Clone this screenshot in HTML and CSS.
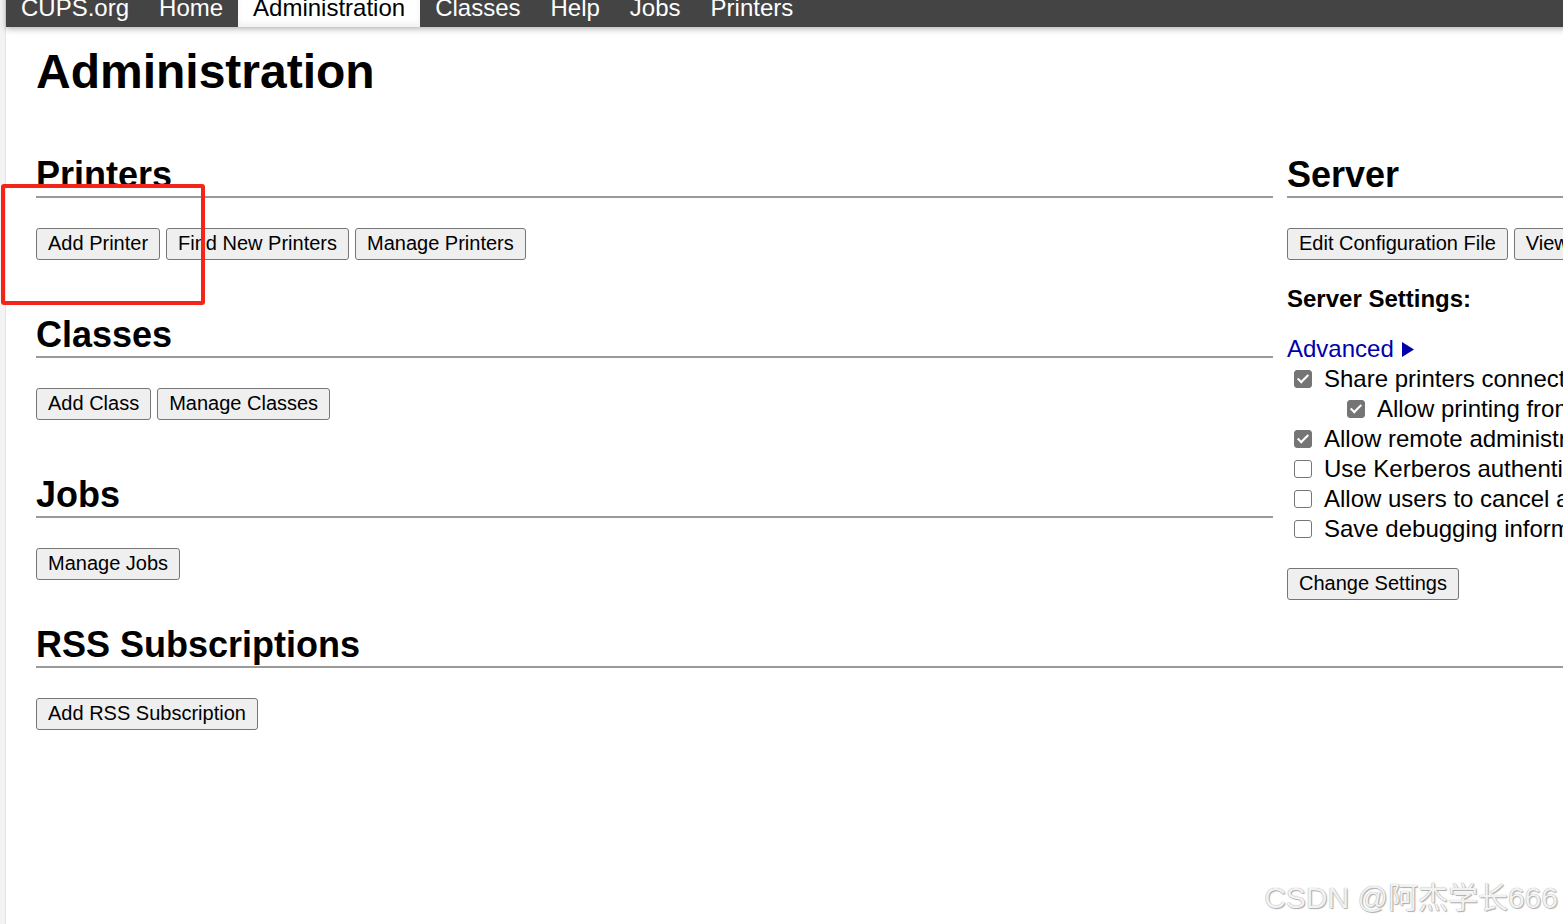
FILE: index.html
```html
<!DOCTYPE html>
<html>
<head>
<meta charset="utf-8">
<title>Administration - CUPS</title>
<link rel="stylesheet" href="styles.css">
</head>
<body>

<div class="page">
    <nav class="navbar">
        <a class="nav-item" href="#">CUPS.org</a>
        <a class="nav-item" href="#">Home</a>
        <a class="nav-item active" href="#">Administration</a>
        <a class="nav-item" href="#">Classes</a>
        <a class="nav-item" href="#">Help</a>
        <a class="nav-item" href="#">Jobs</a>
        <a class="nav-item" href="#">Printers</a>
    </nav>

    <main class="content">
        <h1 class="title">Administration</h1>

        <div class="columns">
            <div class="col">
                <section class="block">
                    <h2 class="block-title">Printers</h2>
                    <div class="buttons">
                        <button class="btn">Add Printer</button>
                        <button class="btn">Find New Printers</button>
                        <button class="btn">Manage Printers</button>
                    </div>
                </section>

                <section class="block">
                    <h2 class="block-title">Classes</h2>
                    <div class="buttons">
                        <button class="btn">Add Class</button>
                        <button class="btn">Manage Classes</button>
                    </div>
                </section>

                <section class="block">
                    <h2 class="block-title">Jobs</h2>
                    <div class="buttons">
                        <button class="btn">Manage Jobs</button>
                    </div>
                </section>
            </div>

            <div class="col">
                <section class="block">
                    <h2 class="block-title">Server</h2>
                    <div class="buttons">
                        <button class="btn">Edit Configuration File</button>
                        <button class="btn">View Access Log</button>
                        <button class="btn">View Error Log</button>
                        <button class="btn">View Page Log</button>
                    </div>

                    <p class="settings-label">Server Settings:</p>

                    <div class="options">
                        <div class="option-row">
                            <a class="advanced" href="#">Advanced
                                <svg class="arrow" width="12" height="15" viewBox="0 0 12 15"><path d="M0 0 L12 7.5 L0 15 Z" fill="#0000aa"/></svg>
                            </a>
                        </div>
                        <label class="option-row"><input type="checkbox" class="check" checked> Share printers connected to this system</label>
                        <label class="option-row indent"><input type="checkbox" class="check" checked> Allow printing from the Internet</label>
                        <label class="option-row"><input type="checkbox" class="check" checked> Allow remote administration</label>
                        <label class="option-row"><input type="checkbox" class="check"> Use Kerberos authentication (FAQ)</label>
                        <label class="option-row"><input type="checkbox" class="check"> Allow users to cancel any job (not just their own)</label>
                        <label class="option-row"><input type="checkbox" class="check"> Save debugging information for troubleshooting</label>
                    </div>

                    <div class="buttons settings-submit">
                        <button class="btn">Change Settings</button>
                    </div>
                </section>
            </div>
        </div>

        <section class="block rss">
            <h2 class="block-title">RSS Subscriptions</h2>
            <div class="buttons">
                <button class="btn">Add RSS Subscription</button>
            </div>
        </section>
    </main>
</div>

<div class="annotation"></div>
<div class="watermark">CSDN @阿杰学长666</div>

</body>
</html>
```

FILE: styles.css
```css
html, body {
    overflow: hidden;
}

body {
    margin: 0;
    background: #f3f3f3;
    color: #000;
    font-family: "Liberation Sans", Arial, sans-serif;
    font-size: 24px;
}

.page {
    margin-left: 5px;
    border-left: 1px solid #e4e4e4;
    background: #fff;
    min-height: 960px;
    width: 2600px;
}

/* top bar, scrolled a few pixels out of view */
.navbar {
    display: flex;
    height: 33px;
    margin-top: -6px;
    background: #444;
    box-shadow: 0 2px 6px rgba(0,0,0,0.3);
}

.nav-item {
    display: block;
    padding: 0 15px;
    line-height: 28px;
    color: #fff;
    text-decoration: none;
}

.nav-item.active {
    background: #fff;
    color: #000;
    box-shadow: inset 0 -4px 6px rgba(0,0,0,0.06);
}

.content {
    padding: 0 30px;
}

.title {
    margin: 17px 0 54px;
    font-size: 48px;
    line-height: 56px;
    font-weight: bold;
}

.columns {
    display: grid;
    grid-template-columns: 1237px 1237px;
    column-gap: 14px;
    align-items: start;
}

.block + .block {
    margin-top: 54px;
}

.block-title {
    margin: 0;
    font-size: 36px;
    line-height: 42px;
    font-weight: bold;
    border-bottom: 2px solid #9a9a9a;
}

.buttons {
    display: flex;
    gap: 6px;
    margin-top: 30px;
    white-space: nowrap;
}

.btn {
    height: 32px;
    padding: 0 11px 2px;
    border: 1px solid #767676;
    border-radius: 3px;
    background: #efefef;
    color: #000;
    font-family: "Liberation Sans", Arial, sans-serif;
    font-size: 20px;
    line-height: 28px;
}

.settings-label {
    margin: 24px 0 0;
    line-height: 30px;
    font-weight: bold;
}

.options {
    margin-top: 20px;
    white-space: nowrap;
}

.option-row {
    display: flex;
    align-items: center;
    height: 30px;
}

.option-row.indent {
    padding-left: 53px;
}

.advanced {
    color: #0000aa;
    text-decoration: none;
}

.arrow {
    margin-left: 2px;
}

.check {
    appearance: none;
    position: relative;
    box-sizing: border-box;
    width: 18px;
    height: 18px;
    margin: 0 12px 0 7px;
    border: 1px solid #767676;
    border-radius: 3px;
    background: #fff;
    flex: none;
}

.check:checked {
    background: #757575;
    border-color: #757575;
}

.check:checked::after {
    content: "";
    position: absolute;
    left: 5px;
    top: 1px;
    width: 4px;
    height: 9px;
    border: solid #fff;
    border-width: 0 2px 2px 0;
    transform: rotate(45deg);
}

.settings-submit {
    margin-top: 24px;
}

.block.rss {
    margin-top: 24px;
}

/* screenshot annotations */
.annotation {
    position: absolute;
    left: 1px;
    top: 184px;
    width: 204px;
    height: 121px;
    box-sizing: border-box;
    border: 4px solid #f5241a;
    border-radius: 3px;
}

.watermark {
    position: absolute;
    right: 5px;
    top: 873px;
    font-family: "Liberation Sans", "Noto Sans CJK SC", sans-serif;
    font-size: 30px;
    color: #f2f2f2;
    text-shadow: 0 0 1px #8f8f8f, 1px 1px 1px #b0b0b0;
}
```
